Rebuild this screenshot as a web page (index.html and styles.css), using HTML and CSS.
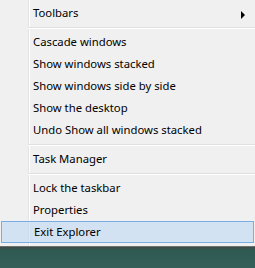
FILE: index.html
```html
<!DOCTYPE html>
<html lang="en">
<head>
    <meta charset="UTF-8">
    <title>Taskbar menu</title>
    <link rel="stylesheet" href="styles.css">
</head>
<body>
    <div class="menu">
        <div class="item submenu">Toolbars
            <svg class="arrow" width="5" height="8" viewBox="0 0 5 8"><path d="M0 0 L4 4 L0 8 Z" fill="#000"/></svg>
        </div>
        <div class="sep"></div>
        <div class="item">Cascade windows</div>
        <div class="item">Show windows stacked</div>
        <div class="item">Show windows side by side</div>
        <div class="item">Show the desktop</div>
        <div class="item">Undo Show all windows stacked</div>
        <div class="sep"></div>
        <div class="item">Task Manager</div>
        <div class="sep"></div>
        <div class="item">Lock the taskbar</div>
        <div class="item">Properties</div>
        <div class="item active">Exit Explorer</div>
    </div>
    <div class="desktop"></div>
</body>
</html>
```

FILE: styles.css
```css
body {
    margin: 0;
    width: 255px;
    height: 268px;
    overflow: hidden;
    font-family: "Noto Sans", "Open Sans", sans-serif;
    font-size: 11.3px;
    color: #000;
    background: #2f5a52;
}
.menu {
    background-color: #f0f0f0;
    background-image: linear-gradient(to right, transparent 28px, #e2e3e3 28px, #e2e3e3 29px, #ffffff 29px, #ffffff 30px, transparent 30px);
    padding: 2px 0 3px 0;
    border-bottom: 1px solid #6b6f6e;
}
.item {
    position: relative;
    height: 22px;
    line-height: 22px;
    padding-left: 33px;
    white-space: nowrap;
}
.arrow {
    position: absolute;
    left: 241px;
    top: 9px;
}
.sep {
    margin: 3px 0 2px 28px;
    border-top: 1px solid #e0e0e0;
    border-bottom: 1px solid #ffffff;
}
.item.active {
    margin: 0 1px;
    height: 20px;
    line-height: 20px;
    padding-left: 32px;
    border: 1px solid #78aee5;
    background: rgba(190, 217, 244, 0.6);
}
.desktop {
    height: 21px;
    background: linear-gradient(to bottom, #3f4a45 0px, #2f5a52 3px, #35605a 100%);
}
```
